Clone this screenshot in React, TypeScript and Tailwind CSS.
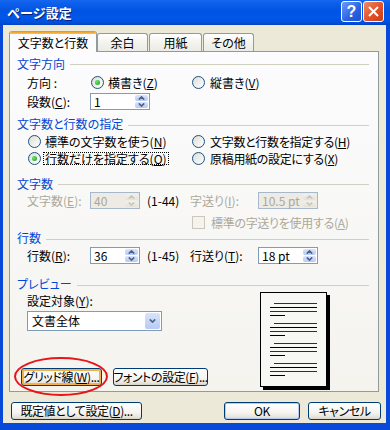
import React from "react";

const Mn = ({ c }: { c: string }) => (
  <span className="underline underline-offset-[1px]">{c}</span>
);

const Radio = ({ checked }: { checked?: boolean }) => (
  <div className="w-[13px] h-[13px] shrink-0 rounded-full border border-[#1C5180] bg-[linear-gradient(135deg,#dcdcd7,#ffffff)] flex items-center justify-center">
    {checked && (
      <div className="w-[5px] h-[5px] rounded-full bg-[radial-gradient(circle_at_35%_35%,#6be868,#1a9a17)]" />
    )}
  </div>
);

const Chevron = ({ up, color }: { up?: boolean; color: string }) => (
  <svg width="7" height="4" viewBox="0 0 7 4">
    <path
      d={up ? "M0.8 3.6 L3.5 0.9 L6.2 3.6" : "M0.8 0.4 L3.5 3.1 L6.2 0.4"}
      fill="none"
      stroke={color}
      strokeWidth="1.6"
    />
  </svg>
);

interface SpinProps {
  value: string;
  w: string;
  disabled?: boolean;
}

const Spin = ({ value, w, disabled }: SpinProps) => {
  const half = disabled
    ? "bg-[linear-gradient(to_bottom,#f2f1ec,#e3e1d8)]"
    : "bg-[linear-gradient(to_bottom,#d9e4fc,#b7caf5)]";
  const arrow = disabled ? "#C9C7BA" : "#4D6185";
  return (
    <div
      className={`${w} h-[17px] flex items-center border ${
        disabled
          ? "border-[#A7B8CC] bg-[#EDEBE3] text-[#ACA899]"
          : "border-[#7F9DB9] bg-white"
      }`}
    >
      <span className="flex-1 pl-[3px] pt-px whitespace-nowrap">{value}</span>
      <div className="w-[15px] h-full flex flex-col gap-px p-px">
        <div className={`flex-1 rounded-[2px] flex items-center justify-center ${half}`}>
          <Chevron up color={arrow} />
        </div>
        <div className={`flex-1 rounded-[2px] flex items-center justify-center ${half}`}>
          <Chevron color={arrow} />
        </div>
      </div>
    </div>
  );
};

const Btn = ({
  children,
  className = "",
}: {
  children: React.ReactNode;
  className?: string;
}) => (
  <div
    className={`h-[18px] flex items-center justify-center whitespace-nowrap tracking-[-0.4px] border border-[#003C74] rounded-[3px] bg-[linear-gradient(to_bottom,#ffffff,#f5f4f0_60%,#e6e3da_88%,#d6d0c5)] ${className}`}
  >
    {children}
  </div>
);

const Heading = ({
  children,
  className = "",
}: {
  children: React.ReactNode;
  className?: string;
}) => (
  <div className={`flex items-center h-[16px] pl-[7px] pr-[9px] ${className}`}>
    <span className="text-[#0046D5]">{children}</span>
    <div className="flex-1 ml-[5px] mt-[2px] h-px bg-[#D0D0BF]" />
  </div>
);

const PreviewPage = () => {
  const groups = [0, 20, 40, 60];
  return (
    <svg width="71" height="99" viewBox="0 0 71 99" shapeRendering="crispEdges">
      <rect x="3" y="3" width="67" height="95" fill="#000" />
      <rect x="0.5" y="0.5" width="66" height="94" fill="#F7F7F4" stroke="#000" />
      {groups.map((g) => (
        <g key={g} strokeWidth="1">
          <line x1="14" y1={11.5 + g} x2="57" y2={11.5 + g} stroke="#0F2F80" />
          <line x1="10" y1={15.5 + g} x2="57" y2={15.5 + g} stroke="#000" />
          <line x1="10" y1={19.5 + g} x2="57" y2={19.5 + g} stroke="#0F2F80" />
          <line x1="10" y1={23.5 + g} x2="25" y2={23.5 + g} stroke="#000" />
        </g>
      ))}
    </svg>
  );
};

const TitleBar = () => (
  <div className="h-[25px] shrink-0 flex pl-[7px] pr-[6px] bg-[linear-gradient(to_bottom,#1467f0_0%,#0a5ce8_20%,#0054e3_45%,#0057ea_70%,#0050dc_90%,#0043c0_100%)]">
    <span className="self-center text-white font-bold text-[13px] leading-[14px] [font-feature-settings:normal] [text-shadow:1px_1px_0_#0a1f7d]">
      ページ設定
    </span>
    <div className="ml-auto flex gap-[1px] pt-[1px]">
      <div className="w-[21px] h-[21px] rounded-[3px] border border-white bg-[linear-gradient(135deg,#6d9bf7,#2a62e3_60%,#1d50cf)] flex items-center justify-center text-white font-bold text-[16px] leading-none [font-family:'Liberation_Sans',sans-serif]">
        ?
      </div>
      <div className="w-[21px] h-[21px] rounded-[3px] border border-white bg-[linear-gradient(135deg,#f08a66,#e0512b_55%,#c83d17)] flex items-center justify-center">
        <svg width="11" height="11" viewBox="0 0 11 11">
          <path d="M1 1 L10 10 M10 1 L1 10" stroke="#fff" strokeWidth="2" />
        </svg>
      </div>
    </div>
  </div>
);

const Tabs = () => (
  <div className="relative z-10 -mb-px h-[27px] flex items-end pl-[6px]">
    <div className="w-[88px] h-[21px] flex flex-col border-x border-[#919B9C] rounded-t-[3px] bg-[#FCFCFE] overflow-hidden">
      <div className="h-[3px] bg-[linear-gradient(to_bottom,#e68b2c,#ffc73c)]" />
      <div className="flex-1 flex items-center justify-center pb-px">文字数と行数</div>
    </div>
    {[
      { t: "余白", w: "w-[51px]", m: "" },
      { t: "用紙", w: "w-[53px]", m: "ml-[1px]" },
      { t: "その他", w: "w-[51px]", m: "ml-[1px]" },
    ].map((tab) => (
      <div
        key={tab.t}
        className={`${tab.w} ${tab.m} h-[18px] mb-px flex items-center justify-center border border-b-0 border-[#919B9C] rounded-t-[3px] bg-[linear-gradient(to_bottom,#ffffff,#f3f3ef_50%,#ecebe5)]`}
      >
        {tab.t}
      </div>
    ))}
  </div>
);

export default function App() {
  return (
    <div className="w-[390px] h-[430px] overflow-hidden flex flex-col bg-[#0849d9] font-['Noto_Sans_CJK_JP',sans-serif] text-[12px] leading-[14px] text-black [font-feature-settings:'palt'] whitespace-nowrap">
      <TitleBar />
      <div className="flex-1 ml-[3px] mr-[4px] mb-[7px] bg-[#ECE9D8] flex flex-col">
        <Tabs />
        <div className="ml-[6px] w-[370px] h-[341px] border border-[#919B9C] bg-[linear-gradient(to_bottom,#fcfcfe,#f4f3ee)] flex flex-col">
          {/* 文字方向 */}
          <Heading className="mt-[4px]">文字方向</Heading>
          <div className="h-[18px] mt-[2px] flex items-center pl-[17px]">
            <div className="w-[64px]">方向 :</div>
            <div className="w-[101px] flex items-center">
              <Radio checked />
              <span className="ml-[4px]">
                横書き(<Mn c="Z" />)
              </span>
            </div>
            <div className="flex items-center">
              <Radio />
              <span className="ml-[5px]">
                縦書き(<Mn c="V" />)
              </span>
            </div>
          </div>
          <div className="h-[20px] flex items-center pl-[17px]">
            <div className="w-[63px]">
              段数(<Mn c="C" />):
            </div>
            <Spin w="w-[60px]" value="1" />
          </div>

          {/* 文字数と行数の指定 */}
          <Heading className="mt-[5px]">文字数と行数の指定</Heading>
          <div className="h-[17px] mt-[1px] flex items-center pl-[18px]">
            <div className="w-[164px] flex items-center">
              <Radio />
              <span className="ml-[4px]">
                標準の文字数を使う(<Mn c="N" />)
              </span>
            </div>
            <div className="flex items-center">
              <Radio />
              <span className="ml-[5px] tracking-[-0.3px]">
                文字数と行数を指定する(<Mn c="H" />)
              </span>
            </div>
          </div>
          <div className="h-[17px] flex items-center pl-[18px]">
            <div className="w-[164px] flex items-center">
              <Radio checked />
              <span className="ml-[2px] px-[1px] border border-dotted border-black leading-[11px]">
                行数だけを指定する(<Mn c="O" />)
              </span>
            </div>
            <div className="flex items-center">
              <Radio />
              <span className="ml-[5px] tracking-[-0.3px]">
                原稿用紙の設定にする(<Mn c="X" />)
              </span>
            </div>
          </div>

          {/* 文字数 */}
          <Heading className="mt-[9px]">文字数</Heading>
          <div className="h-[18px] flex items-center pl-[17px]">
            <div className="w-[63px] text-[#ACA899]">
              文字数(<Mn c="E" />):
            </div>
            <div className="w-[100px] flex items-center">
              <Spin w="w-[50px]" value="40" disabled />
              <span className="ml-[7px]">(1-44)</span>
            </div>
            <div className="w-[68px] text-[#ACA899]">
              字送り(<Mn c="I" />):
            </div>
            <Spin w="w-[60px]" value="10.5 pt" disabled />
          </div>
          <div className="h-[16px] mt-[5px] flex items-center pl-[182px]">
            <div className="w-[13px] h-[13px] border border-[#CAC8BB] bg-[#F4F3EE]" />
            <span className="ml-[6px] text-[#ACA899] tracking-[-0.3px]">
              標準の字送りを使用する(<Mn c="A" />)
            </span>
          </div>

          {/* 行数 */}
          <Heading className="h-[15px]">行数</Heading>
          <div className="h-[19px] flex items-center pl-[17px]">
            <div className="w-[63px]">
              行数(<Mn c="R" />):
            </div>
            <div className="w-[100px] flex items-center">
              <Spin w="w-[50px]" value="36" />
              <span className="ml-[7px]">(1-45)</span>
            </div>
            <div className="w-[68px]">
              行送り(<Mn c="T" />):
            </div>
            <Spin w="w-[60px]" value="18 pt" />
          </div>

          {/* プレビュー */}
          <Heading className="mt-[11px]">プレビュー</Heading>
          <div className="flex">
            <div className="w-[250px] flex flex-col">
              <div className="h-[16px] mt-[1px] pl-[17px] flex items-center">
                設定対象(<Mn c="Y" />):
              </div>
              <div className="ml-[17px] mt-[2px] w-[135px] h-[20px] border border-[#7F9DB9] bg-white flex items-center">
                <span className="flex-1 pl-[4px]">文書全体</span>
                <div className="w-[17px] h-full p-px">
                  <div className="h-full rounded-[2px] bg-[linear-gradient(to_bottom,#d9e4fc,#b7caf5)] flex items-center justify-center">
                    <Chevron color="#4D6185" />
                  </div>
                </div>
              </div>
              <div className="mt-[37px] pl-[11px] flex gap-[11px]">
                <div className="relative">
                  <Btn className="w-[81px] shadow-[inset_0_0_0_2px_#F5B04A]">
                    グリッド線(<Mn c="W" />)...
                  </Btn>
                  <div className="absolute left-[-7px] top-[-11px] w-[94px] h-[39px] rounded-[50%] border-2 border-[#E8141A] pointer-events-none" />
                </div>
                <Btn className="w-[95px]">
                  フォントの設定(<Mn c="F" />)...
                </Btn>
              </div>
            </div>
            <PreviewPage />
          </div>
        </div>

        {/* bottom buttons */}
        <div className="mt-[10px] flex pl-[8px] pr-[5px]">
          <Btn className="w-[131px]">
            既定値として設定(<Mn c="D" />)...
          </Btn>
          <div className="flex-1" />
          <Btn className="w-[76px] shadow-[inset_0_0_0_1px_#B3CBF5]">OK</Btn>
          <Btn className="w-[73px] ml-[8px]">キャンセル</Btn>
        </div>
      </div>
    </div>
  );
}
